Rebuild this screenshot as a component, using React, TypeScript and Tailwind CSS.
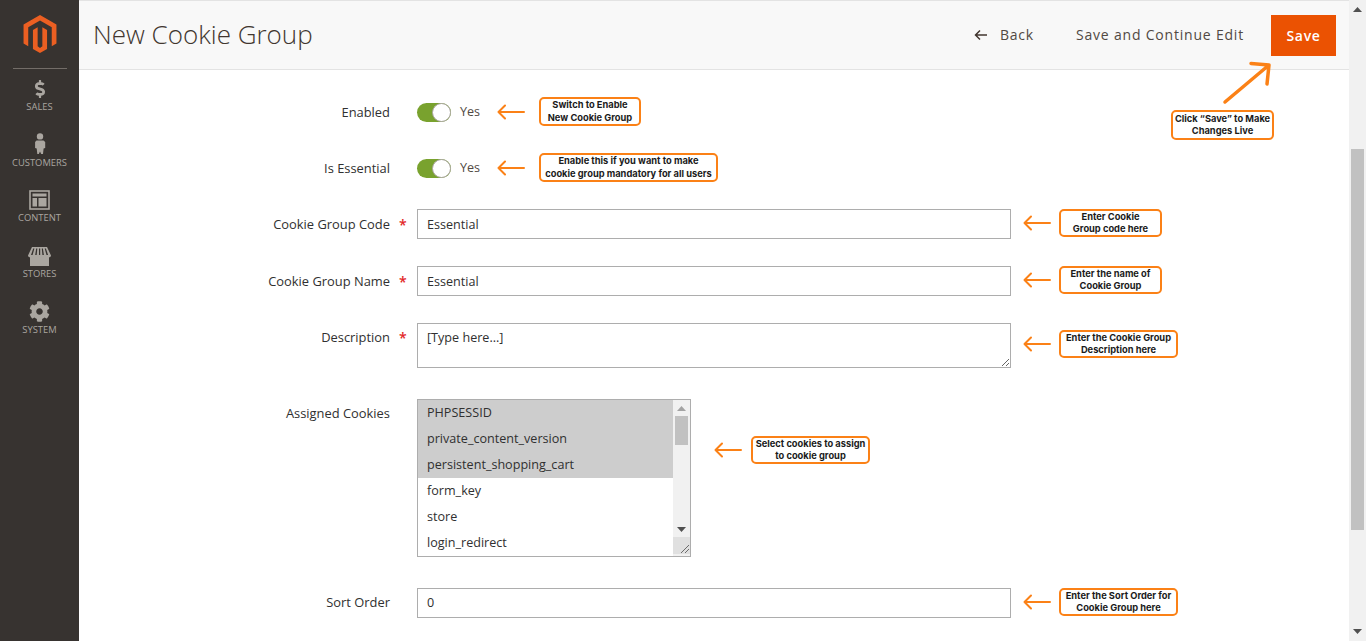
import React from 'react';
import { FaCog, FaDollarSign } from 'react-icons/fa';

function ArrowLeft() {
  return (
    <svg width="28" height="16" viewBox="0 0 28 16" fill="none" stroke="#fb8116" strokeWidth="2" strokeLinecap="round" strokeLinejoin="round">
      <path d="M27 8H1.500M8 1.500L1.500 8L8 14.500" />
    </svg>
  );
}

function Callout({ lines, className }: { lines: string[]; className: string }) {
  return (
    <div className={`flex flex-col items-center justify-center rounded-[5px] border-2 border-[#fb8116] bg-white text-[9.3px] font-bold leading-[12.5px] text-[#1b1b1b] font-['Inter','Liberation_Sans',sans-serif] ${className}`}>
      {lines.map((line) => (
        <span key={line} className="whitespace-nowrap">{line}</span>
      ))}
    </div>
  );
}

function Toggle() {
  return (
    <div className="flex items-center">
      <div className="relative h-[19px] w-[34px] rounded-full bg-[#79a22e]">
        <div className="absolute right-0 top-0 h-[19px] w-[19px] rounded-full border border-[#aaa6a0] bg-white" />
      </div>
      <span className="ml-[9px] text-[12.6px] text-[#514943]">Yes</span>
    </div>
  );
}

function Row({ label, required, tall, className, children }: { label: string; required?: boolean; tall?: boolean; className?: string; children: React.ReactNode }) {
  return (
    <div className={`flex items-start ${className ?? ''}`}>
      <div className={`flex w-[338px] shrink-0 items-center justify-end ${tall ? '-mb-[1px] h-[31px]' : 'h-[29px]'}`}>
        <span className="text-[12.9px] font-medium text-[#303030]">{label}</span>
        <span className={`ml-[9px] w-[18px] text-[14px] font-semibold text-[#e22626] ${required ? '' : 'invisible'}`}>*</span>
      </div>
      {children}
    </div>
  );
}

function TextInput({ value, className }: { value: string; className?: string }) {
  return (
    <input
      readOnly
      value={value}
      className={`h-[30px] w-[594px] shrink-0 border border-[#adadad] bg-white px-[9px] text-[12.6px] text-[#303030] outline-none ${className ?? ''}`}
    />
  );
}

const navClass = 'flex flex-col items-center justify-end text-[9.4px] leading-[14px] text-[#aaa6a0]';

function Sidebar() {
  return (
    <aside className="flex h-full w-[79px] shrink-0 flex-col items-center bg-[#373330]">
      <div className="flex h-[69px] w-[54px] items-start justify-center border-b border-[#736d68] pt-[15px]">
        <svg width="38" height="38" viewBox="0 0 24 24" fill="#eb5f22">
          <path d="M12 24l-4.455-2.572v-12l2.97-1.715v12.001L12 20.856l1.485-1.142V7.713l2.97 1.715v12L12 24zM22.391 6v12l-2.969 1.714V7.713L12 3.43 4.574 7.713v12L1.609 18V6L12 0l10.391 6z" />
        </svg>
      </div>
      <div className="flex flex-col items-center">
        <div className={`${navClass} h-[45px]`}>
          <FaDollarSign className="mb-[2px] text-[18px]" />
          <span>SALES</span>
        </div>
        <div className={`${navClass} h-[56px]`}>
          <svg width="14" height="22" viewBox="0 0 14 22" fill="#aaa6a0" className="mb-[1px]">
            <circle cx="7" cy="3.400" r="3.200" />
            <path d="M3.500 7.500h7l1.700 1.500v6l-1.600.5-.6 5.500H8.200L7 18.500 5.800 21H4.300l-.6-5.500-1.600-.5V9z" />
          </svg>
          <span>CUSTOMERS</span>
        </div>
        <div className={`${navClass} h-[55px]`}>
          <svg width="21" height="20" viewBox="0 0 21 20" fill="none" className="mb-[1px]">
            <rect x="1" y="1" width="19" height="18" stroke="#aaa6a0" strokeWidth="1.600" />
            <path d="M3.500 3.500h14v3h-14zM3.500 8h4.500v8.500H3.500zM9.500 8h8v8.500h-8z" fill="#aaa6a0" />
          </svg>
          <span>CONTENT</span>
        </div>
        <div className={`${navClass} h-[56px]`}>
          <svg width="23" height="19" viewBox="0 0 23 19" fill="#aaa6a0" className="mb-[1px]">
            <path d="M4 0h15l4 8.500c0 1.200-1 1.800-2 1.800v8.700H2v-8.700c-1 0-2-.6-2-1.800zM5.200 1.500L3 8h1.600l1.800-6.500zM8.200 1.500L7.200 8h1.500l.6-6.500zM11 1.500V8h1.200V1.500zM13.800 1.500l.6 6.500h1.500l-1-6.500zM16.700 1.500L18.500 8h1.600l-2.200-6.500z" fillRule="evenodd" />
          </svg>
          <span>STORES</span>
        </div>
        <div className={`${navClass} h-[56px]`}>
          <FaCog className="mb-[1px] text-[21px]" />
          <span>SYSTEM</span>
        </div>
      </div>
    </aside>
  );
}

function Header() {
  return (
    <header className="flex h-[70px] shrink-0 items-center border-y border-t-[#e3e3e3] border-b-[#e3e3e3] bg-[#f8f8f8] pl-[14px] pr-[13px] pt-[1px]">
      <h1 className="-mt-[3px] text-[26px] font-light text-[#41362f]">New Cookie Group</h1>
      <div className="ml-auto flex items-center text-[14px] font-medium tracking-[0.8px] text-[#514943]">
        <svg width="13" height="12" viewBox="0 0 13 12" fill="none" stroke="#41362f" strokeWidth="1.500" className="-mt-[2px] mr-[13px]">
          <path d="M13 6H1.500M6 1.500L1.500 6L6 10.500" />
        </svg>
        <span className="-mt-[2px]">Back</span>
        <span className="-mt-[2px] ml-[42px]">Save and Continue Edit</span>
        <button className="ml-[27px] h-[41px] w-[65px] bg-[#eb5202] text-[14px] font-semibold tracking-[0.65px] text-white">Save</button>
      </div>
    </header>
  );
}

const cookies = ['PHPSESSID', 'private_content_version', 'persistent_shopping_cart', 'form_key', 'store', 'login_redirect'];

function CookieList() {
  return (
    <div className="flex h-[158px] w-[274px] shrink-0 border border-[#adadad] bg-white">
      <div className="flex-1">
        {cookies.map((cookie, i) => (
          <div key={cookie} className={`flex h-[26px] items-center pl-[9px] text-[12.6px] text-[#303030] ${i < 3 ? 'bg-[#cdcdcd]' : ''}`}>
            {cookie}
          </div>
        ))}
      </div>
      <div className="flex w-[17px] flex-col items-center bg-[#f1f1f1]">
        <svg width="9" height="5" viewBox="0 0 9 5" className="mt-[6px]"><path d="M4.500 0L9 5H0z" fill="#a3a3a3" /></svg>
        <div className="mt-[5px] h-[29px] w-[13px] bg-[#c1c1c1]" />
        <svg width="9" height="5" viewBox="0 0 9 5" className="mt-[82px]"><path d="M0 0h9L4.500 5z" fill="#505050" /></svg>
        <div className="mt-[5px] flex h-[17px] w-[17px] items-end justify-end bg-[#e0e0e0]">
          <svg width="10" height="10" viewBox="0 0 10 10" stroke="#6b6b6b" strokeWidth="1"><path d="M1 9l8-8M5 9l4-4" /></svg>
        </div>
      </div>
    </div>
  );
}

function Form() {
  return (
    <main className="flex-1 overflow-hidden bg-white pt-[27px]">
      <Row label="Enabled" tall>
        <div className="flex h-[30px] w-[121px] shrink-0 items-center"><Toggle /></div>
        <div className="-ml-[41px] flex h-[29px] items-center gap-[14px]">
          <ArrowLeft />
          <Callout lines={['Switch to Enable', 'New Cookie Group']} className="h-[29px] w-[102px]" />
        </div>
      </Row>
      <Row label="Is Essential" tall className="mt-[26px]">
        <div className="flex h-[30px] w-[121px] shrink-0 items-center"><Toggle /></div>
        <div className="-ml-[41px] flex h-[29px] items-center gap-[14px]">
          <ArrowLeft />
          <Callout lines={['Enable this if you want to make', 'cookie group mandatory for all users']} className="h-[29px] w-[179px]" />
        </div>
      </Row>
      <Row label="Cookie Group Code" required tall className="mt-[26px]">
        <TextInput value="Essential" />
        <div className="ml-[12px] flex h-[28px] items-center gap-[8px]">
          <ArrowLeft />
          <Callout lines={['Enter Cookie', 'Group code here']} className="h-[28px] w-[103px]" />
        </div>
      </Row>
      <Row label="Cookie Group Name" required tall className="mt-[27px]">
        <TextInput value="Essential" />
        <div className="ml-[12px] flex h-[28px] items-center gap-[8px]">
          <ArrowLeft />
          <Callout lines={['Enter the name of', 'Cookie Group']} className="h-[28px] w-[103px]" />
        </div>
      </Row>
      <Row label="Description" required className="mt-[27px]">
        <textarea
          readOnly
          value="[Type here...]"
          className="h-[45px] w-[594px] shrink-0 border border-[#adadad] bg-white px-[9px] py-[4px] text-[12.6px] leading-[20px] text-[#303030] outline-none"
        />
        <div className="ml-[12px] mt-[7px] flex h-[28px] items-center gap-[8px]">
          <ArrowLeft />
          <Callout lines={['Enter the Cookie Group', 'Description here']} className="h-[28px] w-[119px]" />
        </div>
      </Row>
      <Row label="Assigned Cookies" className="mt-[31px]">
        <CookieList />
        <div className="ml-[23px] mt-[37px] flex h-[28px] items-center gap-[9px]">
          <ArrowLeft />
          <Callout lines={['Select cookies to assign', 'to cookie group']} className="h-[28px] w-[119px]" />
        </div>
      </Row>
      <Row label="Sort Order" className="mt-[31px]">
        <TextInput value="0" className="pb-[1px]" />
        <div className="ml-[12px] flex h-[28px] items-center gap-[8px]">
          <ArrowLeft />
          <Callout lines={['Enter the Sort Order for', 'Cookie Group here']} className="h-[28px] w-[119px]" />
        </div>
      </Row>
    </main>
  );
}

export default function App() {
  return (
    <div className="relative flex h-[641px] w-[1366px] overflow-hidden bg-white font-['Open_Sans',sans-serif]">
      <Sidebar />
      <div className="flex min-w-0 flex-1 flex-col">
        <Header />
        <Form />
      </div>
      <div className="flex w-[17px] shrink-0 flex-col items-center bg-[#f1f1f1]">
        <svg width="9" height="5" viewBox="0 0 9 5" className="mt-[7px]"><path d="M4.500 0L9 5H0z" fill="#505050" /></svg>
        <div className="mt-[137px] h-[381px] w-[13px] bg-[#c1c1c1]" />
        <svg width="9" height="5" viewBox="0 0 9 5" className="mb-[7px] mt-auto"><path d="M0 0h9L4.500 5z" fill="#505050" /></svg>
      </div>

      {/* annotation pointing at the Save button */}
      <svg width="54" height="46" viewBox="0 0 54 46" fill="none" stroke="#fb8116" strokeWidth="3.500" strokeLinecap="round" strokeLinejoin="round" className="absolute left-[1220px] top-[60px]">
        <path d="M5 42L49 5M31 3.500L49 5L47 24" />
      </svg>
      <Callout lines={['Click “Save” to Make', 'Changes Live']} className="absolute left-[1171px] top-[110px] h-[30px] w-[103px]" />
    </div>
  );
}
